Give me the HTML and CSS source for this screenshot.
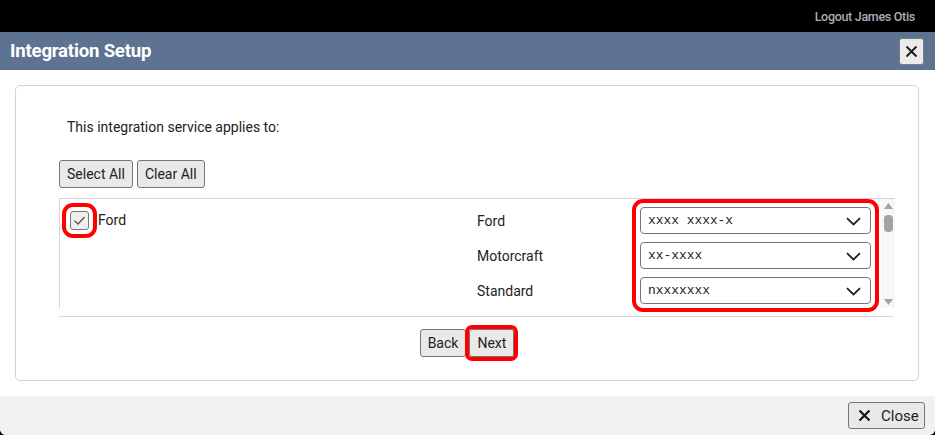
FILE: index.html
```html
<!DOCTYPE html>
<html>
<head>
<meta charset="utf-8">
<link rel="stylesheet" href="styles.css">
</head>
<body>
<div class="topbar"><span class="logout">Logout James Otis</span></div>
<div class="dialog">
  <div class="dlg-header">
    <div class="dlg-title">Integration Setup</div>
    <button class="x-btn">
      <svg width="13" height="13" viewBox="0 0 13 13"><path d="M1.5 1.5 L11.5 11.5 M11.5 1.5 L1.5 11.5" stroke="#1a1a1a" stroke-width="1.8" fill="none"/></svg>
    </button>
  </div>
  <div class="dlg-body">
    <div class="panel">
      <div class="content">
        <p class="intro">This integration service applies to:</p>
        <div class="btn-row">
          <button class="btn">Select All</button>
          <button class="btn">Clear All</button>
        </div>
        <div class="scroll-box">
          <div class="brand-cell">
            <span class="check hl-check">
              <svg width="19" height="19" viewBox="0 0 19 19"><path d="M4.5 9.8 L8 13 L14.5 6" stroke="#555" stroke-width="1.3" fill="none"/></svg>
            </span>
            <span class="brand-name">Ford</span>
          </div>
          <div class="mapping">
            <div class="labels">
              <div class="lbl">Ford</div>
              <div class="lbl">Motorcraft</div>
              <div class="lbl">Standard</div>
            </div>
            <div class="selects hl-group">
              <div class="select"><span>xxxx xxxx-x</span><svg class="chev" width="15" height="9" viewBox="0 0 15 9"><path d="M1 1.2 L7.5 7.5 L14 1.2" stroke="#222" stroke-width="1.8" fill="none"/></svg></div>
              <div class="select"><span>xx-xxxx</span><svg class="chev" width="15" height="9" viewBox="0 0 15 9"><path d="M1 1.2 L7.5 7.5 L14 1.2" stroke="#222" stroke-width="1.8" fill="none"/></svg></div>
              <div class="select"><span>nxxxxxxx</span><svg class="chev" width="15" height="9" viewBox="0 0 15 9"><path d="M1 1.2 L7.5 7.5 L14 1.2" stroke="#222" stroke-width="1.8" fill="none"/></svg></div>
            </div>
          </div>
          <div class="scrollbar">
            <svg class="arrow" width="9" height="6" viewBox="0 0 9 6"><path d="M0 6 L4.5 0 L9 6 Z" fill="#a3a3a3"/></svg>
            <div class="thumb"></div>
            <div class="spacer"></div>
            <svg class="arrow" width="9" height="6" viewBox="0 0 9 6"><path d="M0 0 L4.5 6 L9 0 Z" fill="#a3a3a3"/></svg>
          </div>
        </div>
        <div class="rule"></div>
      </div>
      <div class="nav-row">
        <button class="btn">Back</button>
        <button class="btn hl-next">Next</button>
      </div>
    </div>
  </div>
  <div class="dlg-footer">
    <button class="btn close-btn">
      <svg class="close-x" width="13" height="13" viewBox="0 0 13 13"><path d="M1.5 1.5 L11.5 11.5 M11.5 1.5 L1.5 11.5" stroke="#1a1a1a" stroke-width="2.3" fill="none"/></svg>
      <span>Close</span>
    </button>
  </div>
</div>
</body>
</html>
```
FILE: styles.css
```css
* { box-sizing: border-box; }
html, body { margin: 0; padding: 0; }
body {
  background: #000;
  font-family: Roboto, "Liberation Sans", sans-serif;
  font-size: 14px;
  color: #222;
  width: 935px;
  height: 435px;
  overflow: hidden;
  display: flex;
  flex-direction: column;
}
.topbar {
  height: 32px;
  display: flex;
  align-items: center;
  justify-content: flex-end;
  padding-right: 20px;
}
.logout {
  font-size: 12.5px;
  color: #a8afba;
  letter-spacing: -0.3px;
  font-weight: 500;
}
.dialog {
  flex: 1;
  display: flex;
  flex-direction: column;
  background: #fff;
  border-radius: 0 0 6px 6px;
  overflow: hidden;
}
.dlg-header {
  height: 38px;
  background: #5e7292;
  display: flex;
  align-items: center;
  justify-content: space-between;
  padding: 0 11px 0 10px;
}
.dlg-title {
  color: #fff;
  font-weight: bold;
  font-size: 18.6px;
  letter-spacing: -0.2px;
}
.x-btn {
  width: 25px;
  height: 27px;
  margin-top: 1px;
  border: 1px solid #7d7d7d;
  border-radius: 3px;
  background: #ebebeb;
  padding: 0;
  display: flex;
  align-items: center;
  justify-content: center;
}
.dlg-body {
  flex: 1;
  padding: 15px 16px 15px 15px;
  display: flex;
}
.panel {
  flex: 1;
  border: 1px solid #d4d4d4;
  border-radius: 5px;
  display: flex;
  flex-direction: column;
}
.content {
  margin: 0 23px 0 43px;
}
.intro {
  margin: 31px 0 0 8px;
  line-height: 20px;
}
.btn-row {
  display: flex;
  gap: 4px;
  margin-top: 23px;
}
.btn {
  font-family: Roboto, "Liberation Sans", sans-serif;
  font-size: 14px;
  color: #222;
  background: #e9e9e9;
  border: 1px solid #767676;
  border-radius: 3px;
  height: 28px;
  padding: 0 7px;
}
.scroll-box {
  margin-top: 10px;
  height: 110px;
  border-top: 1px solid #d6d6d6;
  border-left: 1px solid #d6d6d6;
  display: flex;
}
.brand-cell {
  flex: 1;
  display: flex;
  align-items: flex-start;
  padding: 12px 0 0 10px;
  gap: 9px;
}
.check {
  width: 19px;
  height: 19px;
  border: 1px solid #767676;
  border-radius: 3px;
  background: #efefef;
  display: flex;
}
.check svg { margin: -1px; }
.hl-check {
  outline: 4px solid #f00;
  outline-offset: 4px;
}
.brand-name { line-height: 19px; }
.mapping {
  display: flex;
  padding-top: 8px;
}
.labels {
  width: 163px;
  display: flex;
  flex-direction: column;
  gap: 8px;
}
.lbl {
  height: 27px;
  line-height: 29px;
}
.selects {
  width: 231px;
  display: flex;
  flex-direction: column;
  gap: 8px;
  align-self: flex-start;
  border-radius: 3px;
}
.hl-group {
  outline: 4px solid #f00;
  outline-offset: 4px;
}
.select {
  height: 27px;
  border: 1px solid #767676;
  border-radius: 4px;
  background: #fff;
  display: flex;
  align-items: center;
  justify-content: space-between;
  padding: 0 9px 0 7px;
  font-family: "Liberation Mono", monospace;
  font-size: 12.9px;
  color: #222;
}
.chev { margin-top: 1px; }
.scrollbar {
  width: 14px;
  margin-left: 10px;
  background: #f7f7f7;
  display: flex;
  flex-direction: column;
  align-items: center;
  padding: 4px 0 3px;
}
.arrow { flex: none; }
.thumb {
  margin-top: 6px;
  width: 9px;
  height: 17px;
  border-radius: 4px;
  background: #a3a3a3;
}
.spacer { flex: 1; }
.rule {
  margin-top: 8px;
  height: 1px;
  background: #d6d6d6;
  margin-right: 2px;
}
.nav-row {
  display: flex;
  justify-content: center;
  gap: 3px;
  margin-top: 12px;
}
.hl-next {
  outline: 4px solid #f00;
  outline-offset: 0;
  border-radius: 3px;
}
.dlg-footer {
  height: 39px;
  background: #f0f1f3;
  display: flex;
  align-items: center;
  justify-content: flex-end;
  padding-right: 10px;
}
.close-btn {
  width: 77px;
  height: 27px;
  display: flex;
  align-items: center;
  gap: 10px;
  padding: 0 8px 0 9px;
  font-size: 15px;
}
.close-x { flex: none; }
```
